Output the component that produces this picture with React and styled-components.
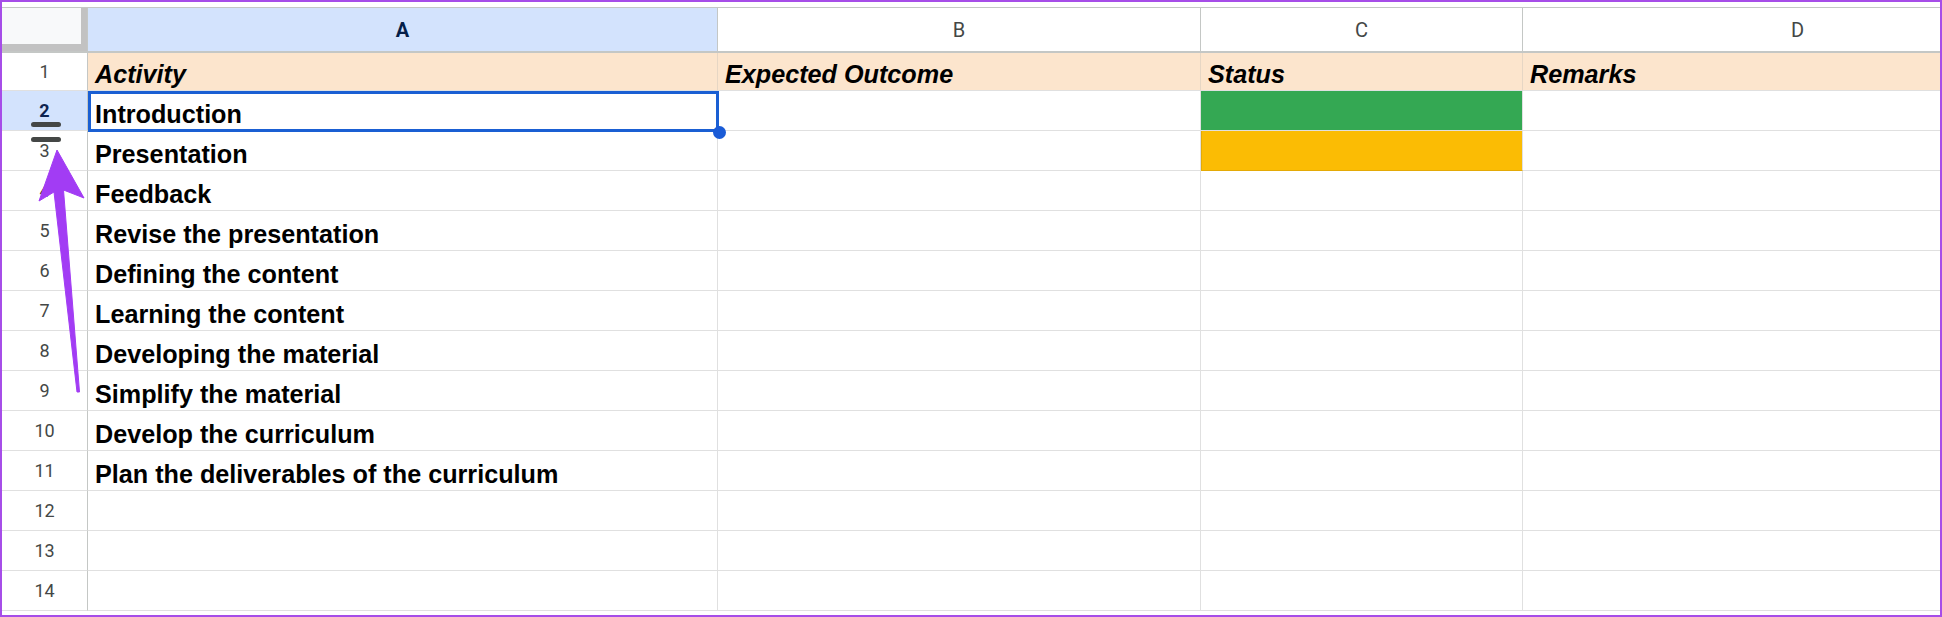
import React from "react";
import styled, { createGlobalStyle } from "styled-components";

const GlobalStyle = createGlobalStyle`
  html, body {
    margin: 0;
    padding: 0;
    background: #fff;
  }
  body {
    font-family: "Liberation Sans", Arial, sans-serif;
  }
`;

const COLUMNS = [
  { id: "A", width: 630 },
  { id: "B", width: 483 },
  { id: "C", width: 322 },
  { id: "D", width: 550 },
];

const HEADINGS = ["Activity", "Expected Outcome", "Status", "Remarks"];

const ACTIVITIES = [
  "Introduction",
  "Presentation",
  "Feedback",
  "Revise the presentation",
  "Defining the content",
  "Learning the content",
  "Developing the material",
  "Simplify the material",
  "Develop the curriculum",
  "Plan the deliverables of the curriculum",
  "",
  "",
  "",
];

// status colours by row index (0 = row 2)
const STATUS = { 0: "#34a853", 1: "#fbbc04" };

export default function App() {
  const template = "86px " + COLUMNS.map((c) => c.width + "px").join(" ");

  return (
    <>
      <GlobalStyle />
      <Frame>
        <Sheet $columns={template}>
          <Corner />
          {COLUMNS.map((col) => (
            <ColHeader key={col.id} $selected={col.id === "A"}>
              {col.id}
            </ColHeader>
          ))}

          <RowHeader>1</RowHeader>
          {HEADINGS.map((h) => (
            <Cell key={h} $heading $fill="#fce5cd">
              {h}
            </Cell>
          ))}

          {ACTIVITIES.map((activity, i) => (
            <React.Fragment key={i}>
              <RowHeader $selected={i === 0}>
                {i + 2}
                {i === 0 && (
                  <ResizeHandle>
                    <Bar />
                    <Bar />
                  </ResizeHandle>
                )}
              </RowHeader>
              <Cell>
                {activity}
                {i === 0 && (
                  <Selection>
                    <FillHandle />
                  </Selection>
                )}
              </Cell>
              <Cell />
              <Cell $fill={STATUS[i]} $outline={i === 1 ? "#e4aa06" : null} />
              <Cell />
            </React.Fragment>
          ))}
        </Sheet>

        <Arrow viewBox="0 0 100 400" width="100" height="400">
          <polygon
            points="57,150 84,198 63.5,190 79.5,392 77,392 54,192 39,201"
            fill="#a23cf4"
            stroke="#a23cf4"
            strokeWidth="1"
            strokeLinejoin="round"
          />
        </Arrow>
      </Frame>
    </>
  );
}

const Frame = styled.div`
  position: relative;
  width: 1942px;
  height: 617px;
  box-sizing: border-box;
  border: 2px solid #a64de8;
  padding-top: 5px;
  overflow: hidden;
  background: #fff;
`;

const Sheet = styled.div`
  display: grid;
  grid-template-columns: ${(p) => p.$columns};
  grid-template-rows: 45px 38px repeat(13, 40px);
  width: max-content;
  border-top: 1px solid #c4c7c5;
`;

const Corner = styled.div`
  box-sizing: border-box;
  background: #f8f9fa;
  border-right: 1px solid #c4c7c5;
  border-bottom: 2px solid #c4c7c5;
  box-shadow: inset -6px 0 0 #c2c2c2, inset 0 -7px 0 #c2c2c2;
`;

const ColHeader = styled.div`
  box-sizing: border-box;
  display: flex;
  align-items: center;
  justify-content: center;
  border-right: 1px solid #c4c7c5;
  border-bottom: 2px solid #c4c7c5;
  background: ${(p) => (p.$selected ? "#d3e3fd" : "#fff")};
  color: ${(p) => (p.$selected ? "#041e49" : "#444746")};
  font-family: Roboto, "Liberation Sans", sans-serif;
  font-size: 20px;
  font-weight: ${(p) => (p.$selected ? 700 : 400)};
`;

const RowHeader = styled.div`
  position: relative;
  z-index: ${(p) => (p.$selected ? 2 : "auto")};
  box-sizing: border-box;
  display: flex;
  align-items: center;
  justify-content: center;
  border-right: 1px solid #c4c7c5;
  border-bottom: 1px solid #e0e0e0;
  background: ${(p) => (p.$selected ? "#d3e3fd" : "#fff")};
  color: ${(p) => (p.$selected ? "#0e2450" : "#444746")};
  font-family: Roboto, "Liberation Sans", sans-serif;
  font-size: 18px;
  font-weight: ${(p) => (p.$selected ? 700 : 400)};
`;

/* row-resize grip that straddles the line between rows 2 and 3 */
const ResizeHandle = styled.div`
  position: absolute;
  left: 29px;
  top: 31px;
  display: flex;
  flex-direction: column;
  gap: 10px;
`;

const Bar = styled.span`
  width: 30px;
  height: 5px;
  border-radius: 3px;
  background: #444746;
`;

const Cell = styled.div`
  position: relative;
  box-sizing: border-box;
  display: flex;
  align-items: flex-end;
  padding: 0 7px 2px;
  border-right: 1px solid ${(p) => (p.$heading ? "#e6d6c4" : "#e0e0e0")};
  border-bottom: 1px solid ${(p) => p.$outline || "#e0e0e0"};
  background: ${(p) => p.$fill || "#fff"};
  box-shadow: ${(p) => (p.$outline ? `inset 1px 0 0 ${p.$outline}` : "none")};
  color: #000;
  font-size: 25.2px;
  line-height: 28px;
  font-weight: 700;
  font-style: ${(p) => (p.$heading ? "italic" : "normal")};
  white-space: nowrap;
`;

const Selection = styled.div`
  position: absolute;
  inset: 0 -2px -2px 0;
  z-index: 3;
  border: 3px solid #1a5fd3;
  pointer-events: none;
`;

const FillHandle = styled.span`
  position: absolute;
  right: -9.5px;
  bottom: -9.5px;
  width: 13px;
  height: 13px;
  border-radius: 50%;
  background: #1a5bd6;
`;

const Arrow = styled.svg`
  position: absolute;
  left: -2px;
  top: -2px;
  z-index: 5;
  pointer-events: none;
`;
